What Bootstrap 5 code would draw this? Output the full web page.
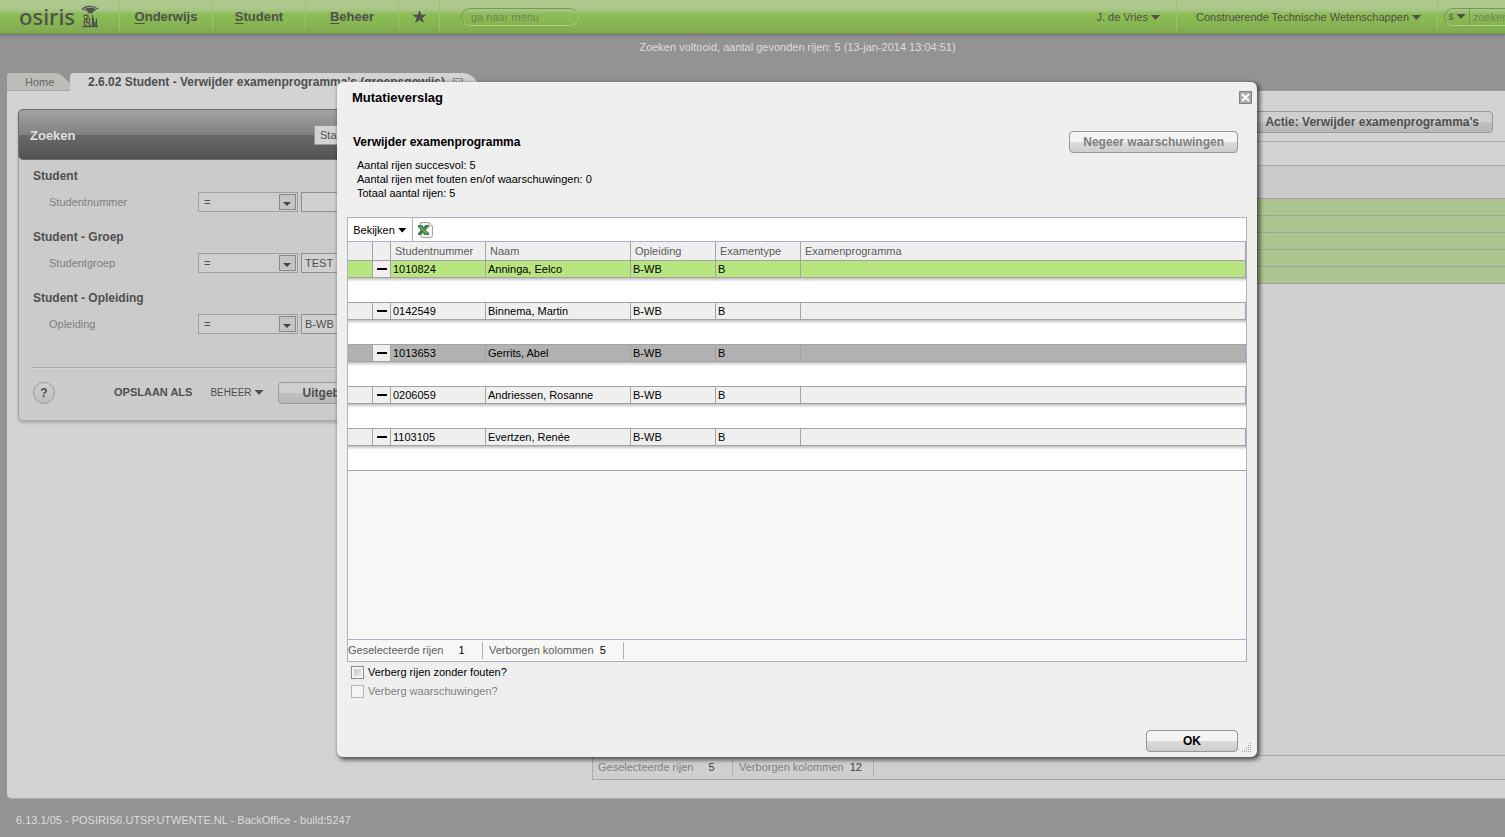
<!DOCTYPE html>
<html lang="nl">
<head>
<meta charset="utf-8">
<meta name="viewport" content="width=device-width, initial-scale=1">
<title>Osiris - Mutatieverslag</title>
<link rel="stylesheet" href="https://cdn.jsdelivr.net/npm/bootstrap@5.3.0/dist/css/bootstrap.min.css">
<style>
  body { background:#939393; color:#4f4f4f; font:11px/14px "Liberation Sans", Arial, sans-serif; min-height:100vh; overflow:hidden; }
  button, input, select { font:inherit; color:inherit; }
  a { color:inherit; text-decoration:none; }
  h1, h2, h3 { font-weight:700; margin:0; }
  .caret { display:inline-block; width:9px; height:5px; background:currentColor; clip-path:polygon(0 0, 100% 0, 50% 100%); margin-left:3px; vertical-align:1px; }

  /* top bar */
  .topbar { height:34px; background:linear-gradient(#b0c991 0, #a9c688 10px, #8cbc57 14px, #8abb52 19px, #80a951 33px); border-bottom:1px solid #75904f; box-shadow:0 1px 4px #6b6b6b; white-space:nowrap; }
  .topbar > * { border-right:1px solid #9bc56e; height:30px; flex:none; }
  .topbar > .plain { border-right:0; }
  .topbar .mainlink { width:93px; font-size:13px; font-weight:700; text-align:center; line-height:34px; }
  .mainlink u { text-underline-offset:2px; }
  .brand { width:120px; padding-left:19px; }
  .brand b { font:500 22px/32px "Noto Sans", sans-serif; width:62px; color:#505050; }
  .starlink { width:41px; }
  .menu-search { padding:8px 0 0 21px; }
  .pill { width:118px; height:18px; border:1px solid #789a51; border-bottom-color:#a9cc80; border-right-color:#a0c577; border-radius:9px; background:transparent; padding:0 9px; }
  .pill::placeholder, .quick input::placeholder { color:#6f8654; opacity:1; }
  .toplink { line-height:34px; padding:0 16px 0 19px; }
  .quick { width:67px; padding:8px 0 0 6px; overflow:hidden; }
  .quick form { width:120px; height:18px; border:1px solid #789a51; border-bottom-color:#a9cc80; border-radius:9px; }
  .quick button { width:25px; height:16px; border:0; border-right:1px solid #789a51; background:none; padding:0; font-size:10px; }
  .quick input { width:80px; border:0; background:none; padding:0 3px; }
  .status-line { color:#dcdcdc; padding-left:90px; height:39px; line-height:27px; }

  /* tabs and page panel */
  .tabs { padding-left:7px; height:18px; }
  .tab-home { width:63px; height:18px; padding-left:18px; line-height:18px; color:#666; background:#bdbdb9; border-bottom:1px solid #a5a5a5; clip-path:path("M0 3Q0 0 3 0H48C54 0 58 6 63 10V18H0z"); }
  .tab-open { background:#d3d3d3; border-radius:4px 0 0 0; height:18px; padding-left:18px; font-size:12px; font-weight:700; line-height:18px; }
  .page-panel { margin-left:7px; background:#d3d3d3; border-bottom:1px solid #aaa; border-radius:0 0 0 5px; height:calc(100vh - 129px); }
  .left-col { width:585px; flex:none; padding:18px 12px 0 11px; }
  .search-card { background:#cbcbcb; border:1px solid #a3a8ae; border-radius:5px; box-shadow:0 2px 3px #aaa; }
  .search-head { height:51px; margin:-1px -1px 0; padding:0 11px; border:1px solid #6c6c6c; border-radius:5px; background:linear-gradient(#a3a3a3, #808080 25px, #696969 25px, #535353); }
  .search-head h2 { color:#e0e0e0; font-size:13px; width:284px; line-height:51px; padding-top:2px; }
  .preset { width:190px; height:20px; margin-top:1px; border:1px solid #999; background:#d3d3d3; padding:0 5px; appearance:none; }
  .search-body { padding:9px 12px 0 14px; }
  .search-body h3 { font-size:12px; line-height:14px; }
  .field { padding:9px 0 18px 16px; }
  .field label { width:149px; color:#7f7f7f; line-height:20px; }
  .op { position:relative; width:100px; height:20px; margin-right:3px; }
  .op select { width:100%; height:20px; appearance:none; border:1px solid #a0a0a4; background:#cfcfcf; border-radius:0; padding:0 5px; }
  .op i { position:absolute; right:2px; top:2px; width:17px; height:16px; border:1px solid #888; background:#c4c4c4; pointer-events:none; }
  .op i::after { content:""; position:absolute; left:3px; top:7px; border:4px solid transparent; border-top-color:#444; border-bottom:0; }
  .field input { width:200px; height:20px; border:1px solid #8f8f94; background:#d0d0d0; padding:0 3px; }
  .search-foot { margin:15px 12px 0; border-top:1px solid #a6a9b0; height:53px; padding-top:14px; box-shadow:inset 0 1px #d5d5d5; }
  .help { width:22px; height:22px; border:1px solid #9f9f9a; border-radius:50%; background:linear-gradient(#d0d0d0, #bbb); font-weight:700; font-size:12px; padding:0; margin:0 59px 0 2px; }
  .textbtn { border:0; background:none; padding:0; margin:3px 18px 0 0; }
  .textbtn.menu { font-size:10px; margin-right:14px; margin-top:4px; }
  .greybtn { height:22px; border:1px solid #999; border-radius:4px; background:linear-gradient(#cfcfcf 50%, #c0c0c0 50%, #b7b7b7); font-size:12px; font-weight:700; line-height:20px; padding:0 13px; }

  /* result list behind the dialog */
  .right-col { border-left:1px solid #a9a9b6; background:#cfcfcd; margin-bottom:18px; }
  .action-bar { background:#d3d3d3; height:50px; padding:20px 12px 0 0; margin-left:-1px; }
  .list-tools { height:25px; background:#d3d3d3; border-top:1px solid #aaa; border-bottom:1px solid #a9a9b6; }
  .list-rows { width:100%; border-collapse:separate; border-spacing:0; }
  .list-rows th, .list-rows td { border-bottom:1px solid #a3a3a3; padding:0; }
  .list-rows th { height:33px; background:#cbcbcb; }
  .list-rows td { height:17px; background:#afc591; }
  .counts { height:21px; line-height:21px; color:#5b5b5b; }
  .counts > span { border-right:1px solid #a9b2c5; height:17px; line-height:17px; width:135px; }
  .counts > span + span { width:141px; padding-left:6px; }
  .counts b { font-weight:400; color:#000; margin-left:12px; }
  .counts span + span b { margin-left:3px; }
  .right-col .counts { box-sizing:content-box; height:23px; border-top:1px solid #a9a9b6; border-bottom:1px solid #a9a9b6; color:#808080; padding-left:5px; }
  .right-col .counts b { color:#404040; }
  .version { color:#dcdcdc; padding:14px 16px 0; }

  /* dialog */
  .report { position:absolute; left:337px; top:82px; width:920px; background:#efefef; color:#000; border-radius:6px; box-shadow:2px 2px 4px 1px rgba(0,0,0,.6); padding:8px 10px 5px; }
  .report h1 { font-size:13px; line-height:15px; padding-left:5px; }
  .close-x { width:13px; height:13px; border:0; padding:0; background:none; margin:1px -5px 0 0; line-height:0; }
  .action-row { margin-top:26px; padding-right:9px; }
  .report h2 { font-size:12px; line-height:22px; padding-left:6px; }
  .lightbtn { height:22px; border:1px solid #989898; border-radius:4px; background:linear-gradient(#f4f4f4 50%, #dcdcdc 50%, #cdcdcd); font-size:12px; font-weight:700; line-height:20px; padding:0 13px; }
  .lightbtn:disabled { color:#7f7f7f; }
  .summary { padding:5px 10px 17px; }
  .grid-box { border:1px solid #a9b2c5; background:#f7f7f6; }
  .grid-tools { height:24px; background:#fff; border-bottom:1px solid #a9b2c5; }
  .grid-tools .view { border:0; border-right:1px solid #a9b2c5; background:none; height:23px; width:65px; padding:0; color:#000; }
  .rows { width:100%; table-layout:fixed; border-collapse:separate; border-spacing:0; }
  .rows th { height:19px; padding:0 4px; font-weight:400; color:#5b5b5b; border:solid #a3a3a3; border-width:0 1px 1px 0; background:#efefef; line-height:18px; }
  .rows td { height:17px; padding:0 2px; border:solid #a3a3a3; border-width:0 1px 1px 0; background:#efefef; line-height:16px; }
  .rows .pick td { background:#b8e57f; }
  .rows .current td { background:#b2b2b2; }
  .rows td.toggle { background:#efefef; padding:0; }
  .toggle button { display:block; width:17px; height:16px; border:0; padding:0; background:none; }
  .toggle button::after { content:""; display:block; width:10px; height:2px; margin:0 auto; background:#000; }
  .rows td.detail { height:25px; background:linear-gradient(#bdbdbd, #e4e4e4 2px, #fff 4px); border-right:0; }
  .filler { height:169px; border-bottom:1px solid #a9b2c5; }
  .tick { padding:3px 4px 2px; line-height:14px; gap:4px; }
  .tick input { appearance:none; width:13px; height:13px; margin:0; border:1px solid #8b8b8b; background:linear-gradient(135deg, #b9bec6, #f4f4f4); box-shadow:inset 0 0 0 2px #f4f4f4; }
  .tick input:disabled { border-color:#b5b5b5; background:#f5f5f5; }
  .tick input:disabled + label { color:#7f7f7f; }
  .ok-row { margin-top:30px; }
  .ok-row .lightbtn { width:92px; }
  .grip { margin:0 -4px 0 4px; }
</style>
</head>
<body>
<header class="topbar d-flex">
  <a href="#" class="brand d-flex align-items-start"><b>osiris</b>
    <svg class="mt-1" width="18" height="24" viewBox="0 0 18 24" fill="none" stroke="#505050" aria-hidden="true"><path d="M1 5.500C5 1.500 12 1.500 17 5M3 6.500C7 3.500 12 3.500 15 6.500" stroke-width="1.200"/><path d="M5.500 4.500H13C13 7.500 11.500 9 9.500 9S6 7.500 5.500 4.500z" fill="#505050"/><path d="M2 12.500L4.500 11 7 12V14L4.500 15 3.500 13.500M4 15L3 18 4.500 22M6 15L5.500 18.500H8L9 22M8.500 14V18M1.500 22.500H17M11.500 11V22M12.500 14V22M15.500 14.500V22M14 18V22" stroke-width="1.300"/></svg></a>
  <a href="#" class="mainlink"><u>O</u>nderwijs</a>
  <a href="#" class="mainlink"><u>S</u>tudent</a>
  <a href="#" class="mainlink"><u>B</u>eheer</a>
  <a href="#" class="starlink pt-1 text-center" aria-label="Favorieten"><svg width="15" height="24" viewBox="0 0 15 24" fill="#505050"><path d="M7.500 6L9.300 10.700H14.500L10.400 13.900 11.900 19 7.500 16 3.100 19 4.600 13.900.5 10.700H5.700z"/></svg></a>
  <div class="plain menu-search"><input class="pill" type="text" placeholder="ga naar menu" aria-label="ga naar menu"></div>
  <a href="#" class="toplink ms-auto">J. de Vries<i class="caret"></i></a>
  <a href="#" class="toplink">Construerende Technische Wetenschappen<i class="caret"></i></a>
  <div class="quick plain"><form class="d-flex"><button type="button">s<i class="caret"></i></button><input type="text" placeholder="zoeken" aria-label="zoeken"></form></div>
</header>
<div class="status-line text-center">Zoeken voltooid, aantal gevonden rijen: 5 (13-jan-2014 13:04:51)</div>

<nav class="tabs d-flex">
  <a href="#" class="tab-home">Home</a>
  <a href="#" class="tab-open">2.6.02 Student - Verwijder examenprogramma's (groepsgewijs)</a>
  <svg width="40" height="18" aria-hidden="true"><path d="M0 0H18C28 0 32 10 40 18H0z" fill="#d3d3d3"/><path d="M8.500 5.500h9v9h-9zM10 7l6 6M16 7l-6 6" fill="none" stroke="#888"/></svg>
</nav>

<main class="page-panel d-flex">
  <section class="left-col">
    <div class="search-card">
      <div class="search-head d-flex align-items-center"><h2>Zoeken</h2><select class="preset" aria-label="Zoekopdracht"><option>Standaard</option></select></div>
      <div class="search-body">
        <h3>Student</h3>
        <div class="field d-flex"><label for="nr">Studentnummer</label><div class="op"><select aria-label="Vergelijking studentnummer"><option>=</option></select><i></i></div><input id="nr" type="text"></div>
        <h3>Student - Groep</h3>
        <div class="field d-flex"><label for="groep">Studentgroep</label><div class="op"><select aria-label="Vergelijking studentgroep"><option>=</option></select><i></i></div><input id="groep" type="text" value="TEST"></div>
        <h3>Student - Opleiding</h3>
        <div class="field d-flex"><label for="opl">Opleiding</label><div class="op"><select aria-label="Vergelijking opleiding"><option>=</option></select><i></i></div><input id="opl" type="text" value="B-WB"></div>
      </div>
      <div class="search-foot d-flex align-items-start">
        <button type="button" class="help">?</button>
        <button type="button" class="textbtn fw-bold">OPSLAAN ALS</button>
        <button type="button" class="textbtn menu">BEHEER<i class="caret"></i></button>
        <button type="button" class="greybtn px-4">Uitgebreid</button>
      </div>
    </div>
  </section>
  <section class="right-col d-flex flex-column flex-grow-1">
    <div class="action-bar text-end"><button type="button" class="greybtn">Actie: Verwijder examenprogramma's</button></div>
    <div class="list-tools"></div>
    <table class="list-rows"><thead><tr><th></th></tr></thead><tbody><tr><td></td></tr><tr><td></td></tr><tr><td></td></tr><tr><td></td></tr><tr><td></td></tr></tbody></table>
    <div class="counts d-flex align-items-center mt-auto"><span>Geselecteerde rijen <b>5</b></span><span>Verborgen kolommen <b>12</b></span></div>
  </section>
</main>
<footer class="version">6.13.1/05 - POSIRIS6.UTSP.UTWENTE.NL - BackOffice - build:5247</footer>

<div class="report" role="dialog" aria-labelledby="report-title">
  <div class="d-flex justify-content-between align-items-start">
    <h1 id="report-title">Mutatieverslag</h1>
    <button type="button" class="close-x" aria-label="Sluiten"><svg width="13" height="13"><path d="M.5.5h12v12H.5z" fill="#aaa" stroke="#808080"/><path d="M3 3l7 7M10 3l-7 7" stroke="#fff" stroke-width="2"/></svg></button>
  </div>
  <div class="action-row d-flex justify-content-between">
    <h2>Verwijder examenprogramma</h2>
    <button type="button" class="lightbtn" disabled>Negeer waarschuwingen</button>
  </div>
  <div class="summary">Aantal rijen succesvol: 5<br>Aantal rijen met fouten en/of waarschuwingen: 0<br>Totaal aantal rijen: 5</div>
  <div class="grid-box">
    <div class="grid-tools d-flex">
      <button type="button" class="view">Bekijken<i class="caret"></i></button>
      <a href="#" class="ms-1" aria-label="Exporteer naar Excel"><svg width="18" height="23" viewBox="0 0 18 23"><path d="M3.500 4.500H12L15.500 8V17.500Q15.500 19.500 13.500 19.500H5.500Q3.500 19.500 3.500 17.500z" fill="#f6f6f6" stroke="#a3a3a3"/><path d="M12 4.500V8H15.500" fill="none" stroke="#bbb"/><path d="M1 7H5L6.500 9 8.500 7H12V8.500L8.500 12 12 15V17H7.500L6 15 4 17H1V15L4 12 1 9z" fill="#3e8445"/><path d="M3 8.500L9.500 15.500" stroke="#a5cf9f"/></svg></a>
    </div>
    <table class="rows">
      <colgroup><col style="width:25px"><col style="width:18px"><col style="width:95px"><col style="width:145px"><col style="width:85px"><col style="width:85px"><col></colgroup>
      <thead><tr><th></th><th></th><th>Studentnummer</th><th>Naam</th><th>Opleiding</th><th>Examentype</th><th>Examenprogramma</th></tr></thead>
      <tbody>
        <tr class="pick"><td></td><td class="toggle"><button type="button" aria-label="Inklappen"></button></td><td>1010824</td><td>Anninga, Eelco</td><td>B-WB</td><td>B</td><td></td></tr>
        <tr><td class="detail" colspan="7"></td></tr>
        <tr><td></td><td class="toggle"><button type="button" aria-label="Inklappen"></button></td><td>0142549</td><td>Binnema, Martin</td><td>B-WB</td><td>B</td><td></td></tr>
        <tr><td class="detail" colspan="7"></td></tr>
        <tr class="current"><td></td><td class="toggle"><button type="button" aria-label="Inklappen"></button></td><td>1013653</td><td>Gerrits, Abel</td><td>B-WB</td><td>B</td><td></td></tr>
        <tr><td class="detail" colspan="7"></td></tr>
        <tr><td></td><td class="toggle"><button type="button" aria-label="Inklappen"></button></td><td>0206059</td><td>Andriessen, Rosanne</td><td>B-WB</td><td>B</td><td></td></tr>
        <tr><td class="detail" colspan="7"></td></tr>
        <tr><td></td><td class="toggle"><button type="button" aria-label="Inklappen"></button></td><td>1103105</td><td>Evertzen, Renée</td><td>B-WB</td><td>B</td><td></td></tr>
        <tr><td class="detail" colspan="7"></td></tr>
      </tbody>
    </table>
    <div class="filler"></div>
    <div class="counts d-flex align-items-center"><span>Geselecteerde rijen <b>1</b></span><span>Verborgen kolommen <b>5</b></span></div>
  </div>
  <div class="tick d-flex align-items-center"><input type="checkbox" id="hide-ok"><label for="hide-ok">Verberg rijen zonder fouten?</label></div>
  <div class="tick d-flex align-items-center"><input type="checkbox" id="hide-warn" disabled><label for="hide-warn">Verberg waarschuwingen?</label></div>
  <div class="ok-row d-flex justify-content-end align-items-end">
    <button type="button" class="lightbtn">OK</button>
    <svg width="9" height="9" class="grip" aria-hidden="true" fill="#a3a3a3"><path d="M8 0h1v1h-1zM8 2h1v1h-1zM6 2h1v1h-1zM8 4h1v1h-1zM6 4h1v1h-1zM4 4h1v1h-1zM8 6h1v1h-1zM6 6h1v1h-1zM4 6h1v1h-1zM2 6h1v1h-1zM8 8h1v1h-1zM6 8h1v1h-1zM4 8h1v1h-1zM2 8h1v1h-1zM0 8h1v1h-1z"/></svg>
  </div>
</div>
<script src="https://cdn.jsdelivr.net/npm/bootstrap@5.3.0/dist/js/bootstrap.bundle.min.js"></script>
</body>
</html>
